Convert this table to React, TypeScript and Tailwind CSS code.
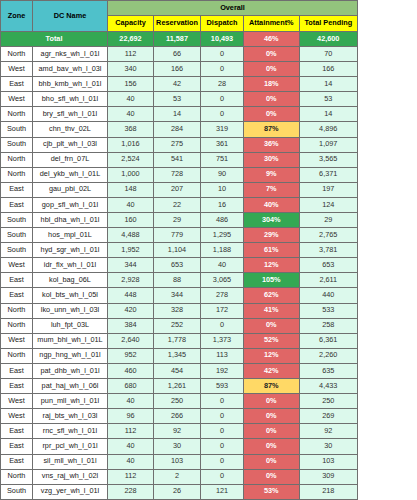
const rows: [string, string, string, string, string, string, string][] = [
  ['North', 'agr_nks_wh_l_01l', '112', '66', '0', '0%', '70'],
  ['West', 'amd_bav_wh_l_03l', '340', '166', '0', '0%', '166'],
  ['East', 'bhb_kmb_wh_l_01l', '156', '42', '28', '18%', '14'],
  ['West', 'bho_sfl_wh_l_01l', '40', '53', '0', '0%', '53'],
  ['North', 'bry_sfl_wh_l_01l', '40', '14', '0', '0%', '14'],
  ['South', 'chn_thv_02L', '368', '284', '319', '87%', '4,896'],
  ['South', 'cjb_plt_wh_l_03l', '1,016', '275', '361', '36%', '1,097'],
  ['North', 'del_frn_07L', '2,524', '541', '751', '30%', '3,565'],
  ['North', 'del_ykb_wh_l_01L', '1,000', '728', '90', '9%', '6,371'],
  ['East', 'gau_pbi_02L', '148', '207', '10', '7%', '197'],
  ['East', 'gop_sfl_wh_l_01l', '40', '22', '16', '40%', '124'],
  ['South', 'hbl_dha_wh_l_01l', '160', '29', '486', '304%', '29'],
  ['South', 'hos_mpl_01L', '4,488', '779', '1,295', '29%', '2,765'],
  ['South', 'hyd_sgr_wh_l_01l', '1,952', '1,104', '1,188', '61%', '3,781'],
  ['West', 'idr_flx_wh_l_01l', '344', '653', '40', '12%', '653'],
  ['East', 'kol_bag_06L', '2,928', '88', '3,065', '105%', '2,611'],
  ['East', 'kol_bts_wh_l_05l', '448', '344', '278', '62%', '440'],
  ['North', 'lko_unn_wh_l_03l', '420', '328', '172', '41%', '533'],
  ['North', 'luh_fpt_03L', '384', '252', '0', '0%', '258'],
  ['West', 'mum_bhi_wh_l_01L', '2,640', '1,778', '1,373', '52%', '6,361'],
  ['North', 'ngp_hng_wh_l_01l', '952', '1,345', '113', '12%', '2,260'],
  ['East', 'pat_dhb_wh_l_01l', '460', '454', '192', '42%', '635'],
  ['East', 'pat_haj_wh_l_06l', '680', '1,261', '593', '87%', '4,433'],
  ['West', 'pun_mll_wh_l_01l', '40', '250', '0', '0%', '250'],
  ['West', 'raj_bts_wh_l_03l', '96', '266', '0', '0%', '269'],
  ['East', 'rnc_sfl_wh_l_01l', '112', '92', '0', '0%', '92'],
  ['East', 'rpr_pcl_wh_l_01l', '40', '30', '0', '0%', '30'],
  ['East', 'sil_mll_wh_l_01l', '40', '103', '0', '0%', '103'],
  ['North', 'vns_raj_wh_l_02l', '112', '2', '0', '0%', '309'],
  ['South', 'vzg_yer_wh_l_01l', '228', '26', '121', '53%', '218'],
];

const cols = 'grid grid-cols-[32px_75px_46px_47px_43px_55.5px_58.5px]';
const cell = 'flex items-center justify-center border-r border-b border-[#6f6f6f] whitespace-nowrap overflow-hidden';

const attainClass = (v: string) => {
  const n = parseInt(v, 10);
  if (n >= 100) return 'bg-[#34a853] text-white font-bold';
  if (n >= 80) return 'bg-[#ffd966] text-[#222] font-bold';
  return 'bg-[#e06666] text-white font-bold';
};

export default function App() {
  return (
    <div className="bg-white w-[417px] h-[500px] overflow-hidden font-['Liberation_Sans',Arial,sans-serif] text-[7.3px] text-[#333]">
      <div className="flex w-fit flex-col border-l border-t border-[#6f6f6f]">
        <div className={`${cols} grid-rows-[15.3px_15.7px]`}>
          <div className={`${cell} row-span-2 bg-[#4fc1ca] font-bold text-black`}>Zone</div>
          <div className={`${cell} row-span-2 bg-[#4fc1ca] font-bold text-black`}>DC Name</div>
          <div className={`${cell} col-span-5 bg-[#93c47d] font-bold text-black`}>Overall</div>
          {['Capacity', 'Reservation', 'Dispatch', 'Attainment%', 'Total Pending'].map((h) => (
            <div key={h} className={`${cell} bg-[#ffff00] font-bold text-black`}>
              {h}
            </div>
          ))}
        </div>

        <div className={`${cols} h-[15px] font-bold text-white`}>
          <div className={`${cell} col-span-2 bg-[#34a853]`}>Total</div>
          <div className={`${cell} bg-[#34a853]`}>22,692</div>
          <div className={`${cell} bg-[#34a853]`}>11,587</div>
          <div className={`${cell} bg-[#34a853]`}>10,493</div>
          <div className={`${cell} bg-[#e06666]`}>46%</div>
          <div className={`${cell} bg-[#34a853]`}>42,600</div>
        </div>

        {rows.map((r) => (
          <div key={r[1]} className={`${cols} h-[15.1px]`}>
            <div className={`${cell} bg-[#ffffff] text-[#222]`}>{r[0]}</div>
            <div className={`${cell} bg-[#ffffff] text-[#222]`}>{r[1]}</div>
            <div className={`${cell} bg-[#dcf9ec]`}>{r[2]}</div>
            <div className={`${cell} bg-[#dcf9ec]`}>{r[3]}</div>
            <div className={`${cell} bg-[#dcf9ec]`}>{r[4]}</div>
            <div className={`${cell} ${attainClass(r[5])}`}>{r[5]}</div>
            <div className={`${cell} bg-[#dcf9ec]`}>{r[6]}</div>
          </div>
        ))}
      </div>
    </div>
  );
}
